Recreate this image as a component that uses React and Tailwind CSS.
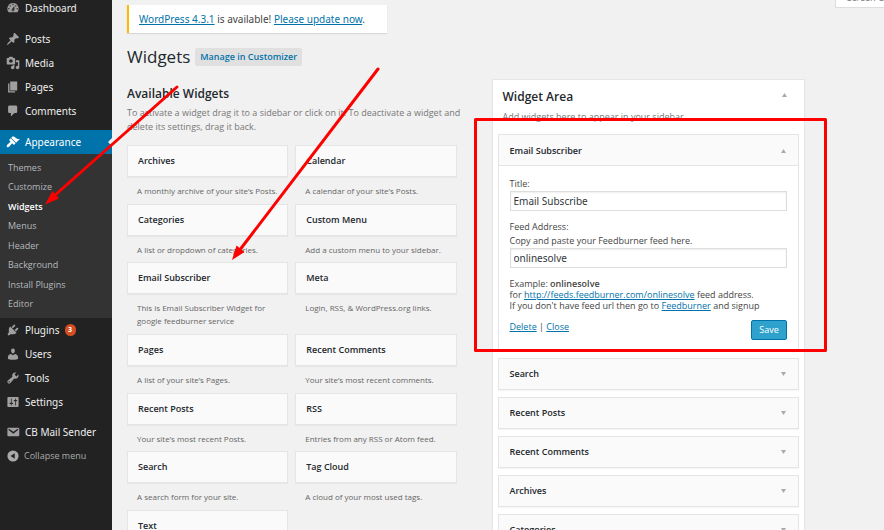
const ICONS = {
  dashboard:
    "M3.76 16h12.48A7.998 7.998 0 0 0 10 3a7.998 7.998 0 0 0-6.24 13zM10 4c.55 0 1 .45 1 1s-.45 1-1 1-1-.45-1-1 .45-1 1-1zM6 6c.55 0 1 .45 1 1s-.45 1-1 1-1-.45-1-1 .45-1 1-1zm8 0c.55 0 1 .45 1 1s-.45 1-1 1-1-.45-1-1 .45-1 1-1zm-5.37 5.55L12 7v6c0 1.1-.9 2-2 2s-2-.9-2-2c0-.57.24-1.08.63-1.45zM4 10c.55 0 1 .45 1 1s-.45 1-1 1-1-.45-1-1 .45-1 1-1zm12 0c.55 0 1 .45 1 1s-.45 1-1 1-1-.45-1-1 .45-1 1-1zm-5 3c0-.55-.45-1-1-1s-1 .45-1 1 .45 1 1 1 1-.45 1-1z",
  posts:
    "M10.44 3.02l1.82-1.82 6.36 6.35-1.83 1.82c-1.05-.68-2.48-.57-3.41.36l-.75.75c-.92.93-1.04 2.35-.35 3.41l-1.83 1.82-2.41-2.41-2.8 2.79c-.42.42-3.38 2.71-3.8 2.29s1.86-3.39 2.28-3.81l2.79-2.79L4.1 9.36l1.83-1.82c1.05.69 2.48.57 3.4-.36l.75-.75c.93-.92 1.05-2.35.36-3.41z",
  media:
    "M13 11V4c0-.55-.45-1-1-1h-1.67L9 1H5L3.67 3H2c-.55 0-1 .45-1 1v7c0 .55.45 1 1 1h10c.55 0 1-.45 1-1zM7 4.5c1.38 0 2.5 1.12 2.5 2.5S8.38 9.5 7 9.5 4.5 8.38 4.5 7 5.62 4.5 7 4.5zM14 6h5v10.5c0 1.38-1.12 2.5-2.5 2.5S14 17.88 14 16.5s1.12-2.5 2.5-2.5c.17 0 .34.02.5.05V9h-3V6zm-4 8.05V13h2v3.5c0 1.38-1.12 2.5-2.5 2.5S7 17.88 7 16.5 8.12 14 9.5 14c.17 0 .34.02.5.05z",
  pages: "M6 15V2h10v13H6zm-1 1h8v2H3V5h2v11z",
  comments:
    "M5 2h9c1.1 0 2 .9 2 2v7c0 1.1-.9 2-2 2h-2l-5 5v-5H5c-1.1 0-2-.9-2-2V4c0-1.1.9-2 2-2z",
  appearance:
    "M14.48 11.06L7.41 3.99l1.5-1.5c.5-.56 2.3-.47 3.51.32 1.21.8 1.43 1.28 2.91 2.1 1.18.64 2.45 1.26 4.45.85zm-.71.71L6.7 4.7 4.93 6.47c-.39.39-.39 1.02 0 1.41l1.06 1.06c.39.39.39 1.03 0 1.42-.6.6-1.43 1.11-2.21 1.69-.35.26-.7.53-1.01.84C1.43 14.23.4 16.08 1.4 17.07c.99 1 2.84-.03 4.18-1.36.31-.31.58-.66.85-1.02.57-.78 1.08-1.61 1.69-2.21.39-.39 1.02-.39 1.41 0l1.06 1.06c.39.39 1.02.39 1.41 0z",
  plugins:
    "M13.11 4.36L9.87 7.6 8 5.73l3.24-3.24c.35-.34 1.05-.2 1.56.32.52.51.66 1.21.31 1.55zm-8 1.77l.91-1.12 9.01 9.01-1.19.84c-.71.71-2.63 1.16-3.82 1.16H6.14L4.9 17.26c-.59.59-1.54.59-2.12 0-.59-.58-.59-1.53 0-2.12l1.24-1.24v-3.88c0-1.13.4-3.19 1.09-3.89zm7.26 3.97l3.24-3.24c.34-.35 1.04-.21 1.55.31.52.51.66 1.21.31 1.55l-3.24 3.25z",
  users:
    "M10 9.25c-2.27 0-2.73-3.44-2.73-3.44C7 4.02 7.82 2 9.97 2c2.16 0 2.98 2.02 2.71 3.81 0 0-.41 3.44-2.68 3.44zm0 2.57L12.72 10c2.39 0 4.52 2.33 4.52 4.53v2.49s-3.65 1.13-7.24 1.13c-3.65 0-7.24-1.13-7.24-1.13v-2.49c0-2.25 1.94-4.48 4.47-4.48z",
  tools:
    "M16.68 9.77c-1.34 1.34-3.3 1.67-4.95.99l-5.41 6.52c-.99.99-2.59.99-3.58 0s-.99-2.59 0-3.57l6.52-5.42c-.68-1.65-.35-3.61.99-4.95 1.28-1.28 3.12-1.62 4.72-1.06l-2.89 2.89 2.82 2.82 2.86-2.87c.53 1.58.18 3.39-1.08 4.65zM3.81 16.21c.4.39 1.04.39 1.43 0 .4-.4.4-1.04 0-1.43-.39-.4-1.03-.4-1.43 0-.39.39-.39 1.03 0 1.43z",
  settings:
    "M18 16V4c0-.55-.45-1-1-1H3c-.55 0-1 .45-1 1v12c0 .55.45 1 1 1h14c.55 0 1-.45 1-1zM8 11h1c.55 0 1 .45 1 1s-.45 1-1 1H8v1.5c0 .28-.22.5-.5.5s-.5-.22-.5-.5V13H6c-.55 0-1-.45-1-1s.45-1 1-1h1V5.5c0-.28.22-.5.5-.5s.5.22.5.5V11zm5-2h-1c-.55 0-1-.45-1-1s.45-1 1-1h1V5.5c0-.28.22-.5.5-.5s.5.22.5.5V7h1c.55 0 1 .45 1 1s-.45 1-1 1h-1v5.5c0 .28-.22.5-.5.5s-.5-.22-.5-.5V9z",
  email:
    "M3.87 4h13.25C18.37 4 19 4.59 19 5.79v8.42c0 1.19-.63 1.79-1.88 1.79H3.87c-1.25 0-1.88-.6-1.88-1.79V5.79c0-1.2.63-1.79 1.88-1.79zm6.62 8.6l6.74-5.53c.24-.2.43-.66.13-1.07-.29-.41-.82-.42-1.17-.17l-5.7 3.86L4.8 5.83c-.35-.25-.88-.24-1.17.17-.3.41-.11.87.13 1.07z",
  collapse: "M10 2a8 8 0 1 0 0 16 8 8 0 0 0 0-16zm2.500 4v8L6.500 10z",
};

const SUBMENU = ["Themes", "Customize", "Widgets", "Menus", "Header", "Background", "Install Plugins", "Editor"];

const AVAILABLE = [
  ["Archives", "A monthly archive of your site’s Posts."],
  ["Calendar", "A calendar of your site’s Posts."],
  ["Categories", "A list or dropdown of categories."],
  ["Custom Menu", "Add a custom menu to your sidebar."],
  ["Email Subscriber", "This is Email Subscriber Widget for google feedburner service"],
  ["Meta", "Login, RSS, & WordPress.org links."],
  ["Pages", "A list of your site’s Pages."],
  ["Recent Comments", "Your site’s most recent comments."],
  ["Recent Posts", "Your site’s most recent Posts."],
  ["RSS", "Entries from any RSS or Atom feed."],
  ["Search", "A search form for your site."],
  ["Tag Cloud", "A cloud of your most used tags."],
  ["Text", "Arbitrary text or HTML."],
];

const PLACED = ["Search", "Recent Posts", "Recent Comments", "Archives", "Categories"];

function Icon({ name }) {
  return (
    <svg viewBox="0 0 20 20" className="size-3.5 shrink-0" fill="currentColor" fillRule="evenodd" aria-hidden="true">
      <path d={ICONS[name]} />
    </svg>
  );
}

function MenuItem({ icon, children }) {
  return (
    <a href="#" className="flex h-6 items-center gap-[5px] pl-1.5 text-[#a0a0a0]">
      <Icon name={icon} />
      <span className="text-[#eee]">{children}</span>
    </a>
  );
}

function Link({ children }) {
  return (
    <a href="#" className="text-[#0073aa] underline">
      {children}
    </a>
  );
}

function Arrow({ up }) {
  return (
    <svg viewBox="0 0 5 4" className="h-1 w-[5px]" fill="#aaa" aria-hidden="true">
      <path d={up ? "M2.5 0L5 4H0z" : "M0 0h5L2.5 4z"} />
    </svg>
  );
}

function Sidebar() {
  return (
    <nav className="w-28 shrink-0 bg-[#222] font-['Noto_Sans','Open_Sans',sans-serif] text-[10px] leading-4">
      <div className="-mt-1">
        <MenuItem icon="dashboard">Dashboard</MenuItem>
      </div>
      <div className="mt-[7px]">
        <MenuItem icon="posts">Posts</MenuItem>
        <MenuItem icon="media">Media</MenuItem>
        <MenuItem icon="pages">Pages</MenuItem>
        <MenuItem icon="comments">Comments</MenuItem>
      </div>
      <a href="#" className="relative mt-[7px] flex h-6 items-center gap-[5px] bg-[#0073aa] pl-1.5 text-white">
        <Icon name="appearance" />
        Appearance
        <span className="absolute top-2 right-0 border-y-4 border-r-4 border-y-transparent border-r-[#f1f1f1]" />
      </a>
      <ul className="grid h-[164px] auto-rows-fr bg-[#333] py-1 font-['Open_Sans',sans-serif] text-[9px] text-[#b4b9be]">
        {SUBMENU.map((item) => (
          <li key={item} className="flex items-center pl-2">
            <a href="#" className={item === "Widgets" ? "font-semibold text-white" : ""}>
              {item}
            </a>
          </li>
        ))}
      </ul>
      <MenuItem icon="plugins">
        <span className="flex items-center gap-[5px]">
          Plugins
          <span className="flex h-3 w-[11px] items-center justify-center rounded-full bg-[#d54e21] text-[7px] font-bold text-white">
            3
          </span>
        </span>
      </MenuItem>
      <MenuItem icon="users">Users</MenuItem>
      <MenuItem icon="tools">Tools</MenuItem>
      <MenuItem icon="settings">Settings</MenuItem>
      <div className="mt-1.5">
        <MenuItem icon="email">CB Mail Sender</MenuItem>
        <button type="button" className="flex h-6 items-center gap-1 pl-1.5 font-['Open_Sans',sans-serif] text-[9px] text-[#aaa]">
          <Icon name="collapse" />
          Collapse menu
        </button>
      </div>
    </nav>
  );
}

function AvailableWidgets() {
  return (
    <section>
      <h2 className="text-[12px] leading-5 font-semibold text-[#23282d]">Available Widgets</h2>
      <p className="-mr-2 mt-0.5 text-[9px] leading-[14px] text-[#777]">
        To activate a widget drag it to a sidebar or click on it. To deactivate a widget and delete its settings, drag
        it back.
      </p>
      <div className="mt-[11px] grid h-[423px] grid-cols-2 content-between gap-x-[7px]">
        {AVAILABLE.map(([name, text]) => (
          <div key={name}>
            <h3 className="border border-[#e5e5e5] bg-[#fafafa] px-2.5 py-[7px] text-[9px] leading-4 font-semibold text-[#23282d] shadow-[0_1px_1px_rgba(0,0,0,0.04)]">
              {name}
            </h3>
            <p className="pt-[7px] pr-1 pb-1.5 pl-2.5 text-[8px] leading-[13px] text-[#666]">{text}</p>
          </div>
        ))}
      </div>
    </section>
  );
}

const INPUT =
  "block h-5 w-full border border-[#ddd] bg-white px-[3px] font-['Noto_Sans','Open_Sans',sans-serif] text-[10px] leading-4 text-[#32373c] shadow-[inset_0_1px_2px_rgba(0,0,0,0.07)] outline-none";

function WidgetArea() {
  return (
    <section className="border border-[#e5e5e5] bg-white px-[5px] shadow-[0_1px_1px_rgba(0,0,0,0.04)]">
      <div className="flex items-start justify-between pt-2 pr-3 pl-[5px]">
        <h2 className="text-[12px] leading-[18px] font-semibold text-[#23282d]">Widget Area</h2>
        <button type="button" aria-label="Collapse Widget Area" className="pt-[5px]">
          <Arrow up />
        </button>
      </div>
      <p className="mt-1 pl-[5px] text-[9px] leading-[14px] text-[#777]">Add widgets here to appear in your sidebar.</p>

      <div className="mt-2.5 border border-[#e5e5e5]">
        <div className="flex h-[31px] items-center justify-between border-b border-[#e5e5e5] bg-[#fafafa] pt-px pr-3 pl-[11px]">
          <h3 className="text-[9px] leading-4 font-semibold text-[#23282d]">Email Subscriber</h3>
          <button type="button" aria-label="Collapse Email Subscriber">
            <Arrow up />
          </button>
        </div>
        <form className="px-[11px] pt-[11px] pb-2.5 text-[9px] leading-[14px] text-[#444]">
          <label htmlFor="widget-title" className="block">
            Title:
          </label>
          <input id="widget-title" className={INPUT} defaultValue="Email Subscribe" />
          <label htmlFor="widget-feed" className="mt-[9px] block">
            Feed Address:
            <br />
            Copy and paste your Feedburner feed here.
          </label>
          <input id="widget-feed" className={INPUT} defaultValue="onlinesolve" />
          <p className="mt-2.5 leading-[11px]">
            Example: <span className="font-semibold">onlinesolve</span>
            <br />
            for <Link>http://feeds.feedburner.com/onlinesolve</Link> feed address.
            <br />
            If you don't have feed url then go to <Link>Feedburner</Link> and signup
          </p>
          <div className="mt-[9px] flex items-start justify-between">
            <p>
              <Link>Delete</Link> | <Link>Close</Link>
            </p>
            <button
              type="button"
              className="h-5 w-9 rounded-xs border border-[#0073aa] bg-[#2ea2cc] text-[9px] leading-4 text-white"
            >
              Save
            </button>
          </div>
        </form>
      </div>

      <div className="mt-[7px] flex flex-col gap-[7px]">
        {PLACED.map((name) => (
          <div
            key={name}
            className="flex h-8 items-center justify-between border border-[#e5e5e5] bg-[#fafafa] pr-3 pl-[11px] shadow-[0_1px_1px_rgba(0,0,0,0.04)]"
          >
            <h3 className="text-[9px] leading-4 font-semibold text-[#23282d]">{name}</h3>
            <button type="button" aria-label={"Expand " + name}>
              <Arrow />
            </button>
          </div>
        ))}
      </div>
    </section>
  );
}

function Annotations() {
  return (
    <svg className="pointer-events-none absolute top-0 left-0" width="884" height="530" fill="none" aria-hidden="true">
      <g stroke="#f00" strokeWidth="3" strokeLinecap="round">
        <path d="M177 87L54 196" />
        <path d="M378 69L239 251" />
        <rect x="475.500" y="119.500" width="350" height="231" strokeLinejoin="round" />
      </g>
      <path d="M45 204.500L52.500 191L59 198.500zM232 260L236.500 245.500L244.500 252z" fill="#f00" />
    </svg>
  );
}

export default function App() {
  return (
    <div className="relative flex h-screen overflow-hidden bg-[#f1f1f1] font-['Open_Sans',sans-serif] text-[#444]">
      <Sidebar />
      <main className="min-w-0 flex-1 pl-[15px]">
        <div className="flex items-start justify-between">
          <p className="mt-[5px] border-l-2 border-[#ffba00] bg-white py-1.5 pr-[22px] pl-2.5 font-['Noto_Sans','Open_Sans',sans-serif] text-[10px] leading-4 shadow-[0_1px_1px_rgba(0,0,0,0.1)]">
            <Link>WordPress 4.3.1</Link> is available! <Link>Please update now</Link>.
          </p>
          <button
            type="button"
            className="-mt-3 h-5 w-[49px] overflow-hidden border border-r-0 border-[#ddd] bg-white pl-[11px] text-left text-[9px] leading-3 whitespace-nowrap text-[#777]"
          >
            Screen Options
          </button>
        </div>
        <div className="mt-3.5 flex items-center gap-[5px]">
          <h1 className="text-[17px] leading-5 text-[#23282d]">Widgets</h1>
          <a
            href="#"
            className="rounded-xs bg-[#e0e0e0] px-[5px] py-px text-[9px] leading-4 font-semibold text-[#0073aa]"
          >
            Manage in Customizer
          </a>
        </div>
        <div className="mt-3 flex gap-[35px] pr-[79px]">
          <div className="min-w-0 flex-[329] pt-[5px]">
            <AvailableWidgets />
          </div>
          <div className="min-w-0 flex-[313]">
            <WidgetArea />
          </div>
        </div>
      </main>
      <Annotations />
    </div>
  );
}
